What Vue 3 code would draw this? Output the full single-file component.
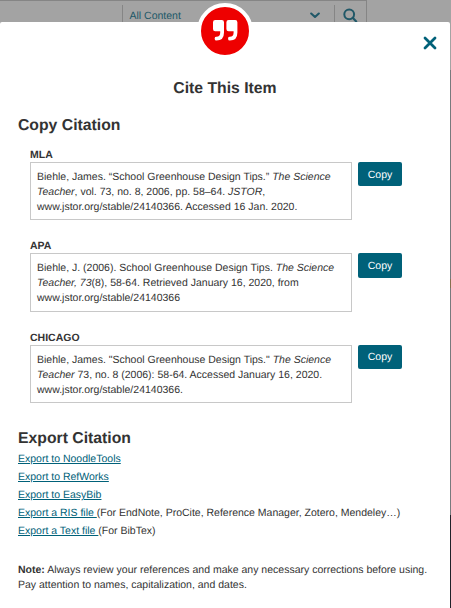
<script setup>
const citations = [
  {
    style: 'MLA',
    lines: [
      [{ t: 'Biehle, James. “School Greenhouse Design Tips.” ' }, { t: 'The Science', i: true }],
      [{ t: 'Teacher', i: true }, { t: ', vol. 73, no. 8, 2006, pp. 58–64. ' }, { t: 'JSTOR', i: true }, { t: ',' }],
      [{ t: 'www.jstor.org/stable/24140366. Accessed 16 Jan. 2020.' }],
    ],
  },
  {
    style: 'APA',
    lines: [
      [{ t: 'Biehle, J. (2006). School Greenhouse Design Tips. ' }, { t: 'The Science', i: true }],
      [{ t: 'Teacher, 73', i: true }, { t: '(8), 58-64. Retrieved January 16, 2020, from' }],
      [{ t: 'www.jstor.org/stable/24140366' }],
    ],
  },
  {
    style: 'CHICAGO',
    lines: [
      [{ t: 'Biehle, James. "School Greenhouse Design Tips." ' }, { t: 'The Science', i: true }],
      [{ t: 'Teacher', i: true }, { t: ' 73, no. 8 (2006): 58-64. Accessed January 16, 2020.' }],
      [{ t: 'www.jstor.org/stable/24140366.' }],
    ],
  },
]

const exportsList = [
  { label: 'Export to NoodleTools' },
  { label: 'Export to RefWorks' },
  { label: 'Export to EasyBib' },
  { label: 'Export a RIS file ', note: '(For EndNote, ProCite, Reference Manager, Zotero, Mendeley…)' },
  { label: 'Export a Text file ', note: '(For BibTex)' },
]
</script>

<template>
  <div class="page">
    <div class="topbar">
      <div class="search">
        <div class="scope">
          <span>All Content</span>
          <svg class="chevron" width="10" height="7" viewBox="0 0 10 7">
            <path d="M1.2 1.5 5 5 8.8 1.5" fill="none" stroke="#205868" stroke-width="2.1" stroke-linecap="round" stroke-linejoin="round" />
          </svg>
        </div>
        <div class="find">
          <svg width="15" height="15" viewBox="0 0 15 15">
            <circle cx="6.2" cy="6.3" r="4.9" fill="none" stroke="#205868" stroke-width="2" />
            <path d="M9.7 9.8 13.2 13.4" stroke="#205868" stroke-width="2.2" stroke-linecap="round" />
          </svg>
        </div>
      </div>
    </div>

    <div class="modal">
      <div class="badge">
        <svg width="25" height="21" viewBox="0 0 25 21">
          <g fill="#fff">
            <path d="M2.2 0H8.8Q11 0 11 2.2V12.5Q11 20.6 3.4 20.6Q1.7 20.6 1.7 19V18.2Q1.7 16.8 3.4 16.8Q7.2 16.8 7.2 12.8V11.2H2.2Q0 11.2 0 9V2.2Q0 0 2.2 0Z" />
            <path transform="translate(13.4 0)" d="M2.2 0H8.8Q11 0 11 2.2V12.5Q11 20.6 3.4 20.6Q1.7 20.6 1.7 19V18.2Q1.7 16.8 3.4 16.8Q7.2 16.8 7.2 12.8V11.2H2.2Q0 11.2 0 9V2.2Q0 0 2.2 0Z" />
          </g>
        </svg>
      </div>
      <button class="close" aria-label="Close">
        <svg width="14" height="14" viewBox="0 0 14 14">
          <path d="M2 2 12 12M12 2 2 12" stroke="#006179" stroke-width="2.8" stroke-linecap="round" />
        </svg>
      </button>

      <h1>Cite This Item</h1>
      <h2>Copy Citation</h2>
      <section v-for="c in citations" :key="c.style" class="citation">
        <h3>{{ c.style }}</h3>
        <div class="row">
          <div class="box">
            <div v-for="(line, n) in c.lines" :key="n" class="line"><span v-for="(p, k) in line" :key="k" :class="{ italic: p.i }">{{ p.t }}</span></div>
          </div>
          <button class="copy">Copy</button>
        </div>
      </section>

      <h2 class="export-title">Export Citation</h2>
      <ul>
        <li v-for="e in exportsList" :key="e.label"><a>{{ e.label }}</a>{{ e.note }}</li>
      </ul>
      <div class="note">
        <div><b>Note:</b> Always review your references and make any necessary corrections before using.</div>
        <div>Pay attention to names, capitalization, and dates.</div>
      </div>
    </div>
  </div>
</template>

<style>
body {
  margin: 0;
  overflow: hidden;
}
</style>

<style scoped>
* {
  box-sizing: border-box;
}
.page {
  width: 451px;
  height: 608px;
  overflow: hidden;
  background: linear-gradient(#a3a3a3 0 70px, #777a7d 70px 279px, #86704f 279px 288px, #777a7d 288px 515px, #202129 515px);
  font-family: "Liberation Sans", Arial, sans-serif;
  font-size: 10.5px;
  text-rendering: geometricPrecision;
  color: #333;
}
.topbar {
  height: 22px;
  background: #a3a3a3;
}
.search {
  display: flex;
  width: 367px;
  height: 22px;
  padding-top: 4px;
  border-top: 1px solid #858585;
  border-right: 1px solid #858585;
}
.scope {
  display: flex;
  flex: 1;
  align-items: center;
  justify-content: space-between;
  margin-left: 122px;
  padding: 4px 14px 0 6.5px;
  border-left: 1px solid #858585;
  color: #205868;
}
.find {
  width: 32px;
  padding: 3px 0 0 8px;
  border-left: 1px solid #858585;
}
.find svg {
  display: block;
}
.modal {
  position: relative;
  width: 450px;
  height: 586px;
  padding: 0 18px;
  border-radius: 2px 2px 0 0;
  background: #fff;
}
.badge {
  position: absolute;
  top: -19px;
  left: 197px;
  display: flex;
  align-items: center;
  justify-content: center;
  width: 56px;
  height: 56px;
  padding-bottom: 2px;
  border: 4px solid #fff;
  border-radius: 50%;
  background: #ee0000;
}
.close {
  position: absolute;
  top: 14px;
  right: 13px;
  display: block;
  width: 14px;
  height: 14px;
  padding: 0;
  border: 0;
  background: none;
}
.close svg {
  display: block;
}
h1,
h2,
h3 {
  margin: 0;
  font-weight: bold;
}
h1 {
  padding-top: 57px;
  font-size: 15.75px;
  line-height: 20px;
  text-align: center;
}
h2 {
  padding-top: 17px;
  font-size: 15.75px;
  line-height: 20px;
}
.citation {
  height: 91.4px;
  padding: 12px 0 0 12px;
}
h3 {
  font-size: 10.5px;
  line-height: 14px;
}
.row {
  display: flex;
  gap: 6px;
  align-items: flex-start;
}
.box {
  width: 322px;
  height: 58.4px;
  padding: 7px 6px 0;
  border: 1px solid #c8c8c8;
}
.line {
  height: 15px;
  line-height: 15px;
  white-space: pre;
}
.italic {
  font-style: italic;
}
.copy {
  width: 44px;
  height: 24.3px;
  padding: 1px 0 0;
  border: 0;
  border-radius: 2px;
  background: #006179;
  color: #fff;
  font: inherit;
  text-rendering: inherit;
}
.export-title {
  padding-top: 19.3px;
}
ul {
  margin: 1px 0 0;
  padding: 0;
  list-style: none;
}
li {
  height: 18px;
  line-height: 18px;
  white-space: pre;
}
a {
  color: #006179;
  text-decoration: underline;
}
.note {
  padding-top: 23px;
  line-height: 15px;
  white-space: nowrap;
}
</style>
